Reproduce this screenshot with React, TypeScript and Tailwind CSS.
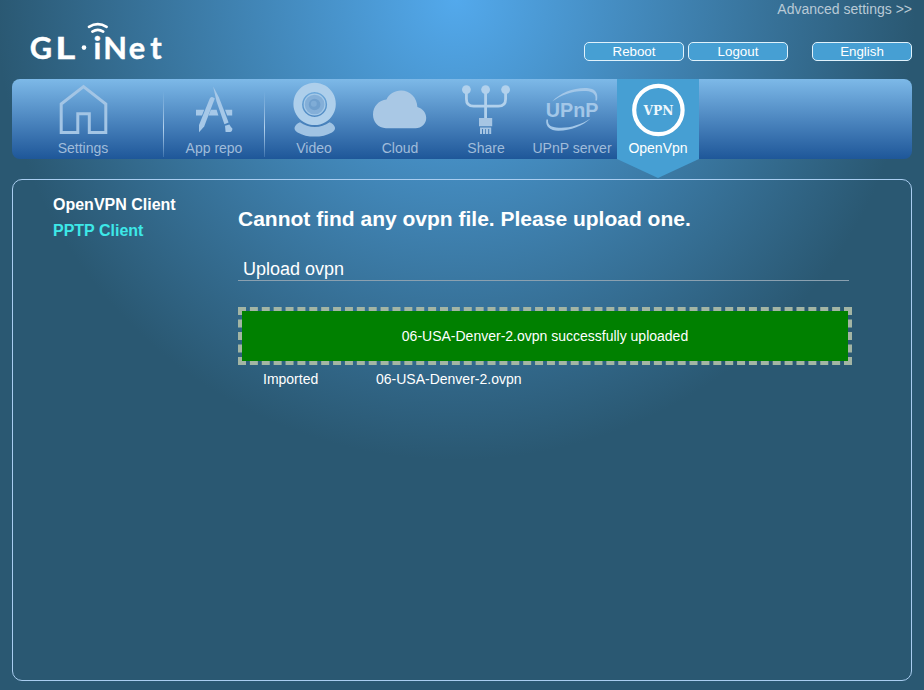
import React from "react";

const label = "mt-px h-[18px] text-center text-sm leading-[18px] whitespace-nowrap";

function Logo() {
  return (
    <svg width="200" height="79" viewBox="0 0 200 79" className="block" fill="#fff">
      <g fontFamily="Lato, 'Open Sans', sans-serif" fontWeight="700" fontSize="30.8" stroke="#fff" strokeWidth="0.4">
        <text x="29.8" y="58.8">G</text>
        <text x="55.2" y="58.8" textLength="20" lengthAdjust="spacingAndGlyphs">L</text>
        <text y="58.8" x="93.4 103.2 128.8 150.2">iNet</text>
      </g>
      <circle cx="84" cy="47.6" r="2.3" />
      <path d="M89 26.8Q97.8 21.6 106.6 26.8M92.4 31.6Q97.8 28 103.2 31.6" fill="none" stroke="#fff" strokeWidth="2.7" strokeLinecap="round" />
    </svg>
  );
}

function HomeIcon() {
  return (
    <svg width="142" height="59" viewBox="12 79 142 59" className="block">
      <path d="M61.2 104L83.5 86.6L105.8 104V132.4H89.3V113.8H77.8V132.4H61.2Z" fill="none" stroke="#a3c5e5" strokeWidth="3" />
    </svg>
  );
}

function AppIcon() {
  return (
    <svg width="100" height="59" viewBox="164 79 100 59" className="block" fill="#a6c8e8">
      <path d="M196 109.8H204.2L202 115.4H196ZM210.8 109.8H216.6L218.4 115.4H208.6ZM225 109.8H232.2V115.4H227.2Z" />
      <path d="M209.8 98.4Q212 95.6 214.8 98.6L204.2 126.6L199 132.2V125Z" />
      <path d="M213.2 86.5L219 97.6L228.6 122.4L224.4 124.2L216.4 101Z" />
      <path d="M225 125.8L229.4 124.4Q230.4 126.4 232.4 128.4Q232.4 131.6 230 132H225.6Z" />
    </svg>
  );
}

function VideoIcon() {
  return (
    <svg width="86" height="59" viewBox="271 79 86 59" className="block">
      <path d="M300 122.2C294 124.8 292.6 129.6 297.6 132.4C307 138 322 138 332 132.4C337 129.6 335.6 124.8 329.6 122.2C321 128.6 308.6 128.6 300 122.2Z" fill="#a0c3e3" />
      <path fillRule="evenodd" d="M314.6 82.7a21.2 21.2 0 1 0 .01 0ZM314.6 92a12.5 12.5 0 1 1-.01 0Z" fill="#aecfeb" />
      <circle cx="314.6" cy="104.5" r="10.4" fill="#84afd8" stroke="#a5c9e8" strokeWidth="1.2" />
      <circle cx="314.6" cy="104.5" r="5.8" fill="#6f9fcd" />
      <circle cx="313.8" cy="103.8" r="3" fill="#7facd6" />
    </svg>
  );
}

function CloudIcon() {
  return (
    <svg width="86" height="59" viewBox="357 79 86 59" className="block">
      <path d="M386 128.2C378 128 373 122 373 114.5C373 106.5 379 100 386.5 99.5C389 94 394.5 90.5 401 90.5C410 90.5 417 97.5 417.4 107C422.5 108.5 426.2 112.7 426.2 118C426.2 124 421.5 128.2 415.5 128.2Z" fill="#a9c8e5" />
    </svg>
  );
}

function ShareIcon() {
  return (
    <svg width="86" height="59" viewBox="443 79 86 59" className="block" fill="#b2d1ec">
      <circle cx="466.4" cy="89.6" r="4.4" />
      <circle cx="485.6" cy="89.6" r="4.4" />
      <circle cx="505.6" cy="89.6" r="4.4" />
      <path d="M466.4 90V99Q466.4 106.2 473.6 106.2H498.4Q505.6 106.2 505.6 99V90M485.6 90V119" fill="none" stroke="#b2d1ec" strokeWidth="2.8" />
      <path d="M479 118H492.2V126.2H479ZM480 127.4H491.2V134H489.2V129H488.2V134H486V129H485.2V134H483V129H482V134H480Z" fill="#a6c5e3" />
    </svg>
  );
}

function UpnpIcon() {
  return (
    <svg width="86" height="59" viewBox="529 79 86 59" className="block" fill="#a3c7e8">
      <path d="M552.2 101.6C560 92.5 575 87.3 587 88C595 88.6 598.5 92.5 597 100.6L595.4 100.6C596.4 95 594 91.6 586 91C574 90.2 561 94.6 552.2 101.6Z" />
      <path d="M546.4 119.6C545 127 550.5 130.6 558 130.8C570 131 583 126 590.6 118.6C581 125 569 128.4 559 127.8C551 127.4 547.4 125.5 548 119.6Z" />
      <text x="545.8" y="116.8" textLength="52.6" lengthAdjust="spacingAndGlyphs" fontFamily="'Liberation Sans', Arial, sans-serif" fontSize="19.5" fontWeight="700">
        UPnP
      </text>
    </svg>
  );
}

function VpnIcon() {
  return (
    <svg width="82" height="59" viewBox="617 79 82 59" className="block" fill="#fff">
      <circle cx="658.4" cy="110" r="24.2" fill="none" stroke="#fff" strokeWidth="4.2" />
      <text x="643.6" y="114.6" textLength="30" fontFamily="'DejaVu Serif', serif" fontSize="12.5" fontWeight="700" lengthAdjust="spacingAndGlyphs" fill="#eef7fc">
        VPN
      </text>
    </svg>
  );
}

function NavItem({ icon, text, className }: { icon: React.ReactNode; text: string; className: string }) {
  return (
    <a className={className}>
      {icon}
      <div className={label}>{text}</div>
    </a>
  );
}

function Divider() {
  return <div className="mt-3 h-[66px] w-px bg-linear-to-b from-[#a9cdec]/0 via-[#b4d2ee] via-55% to-[#a9cdec]/20" />;
}

function TopButton({ text }: { text: string }) {
  return (
    <button className="h-[19px] w-[100px] rounded-[5px] border border-[#e0f2fc] bg-[#469fd3] text-[13.33px] leading-[17px] text-white">
      {text}
    </button>
  );
}

export default function App() {
  return (
    <div className="h-[690px] w-[924px] overflow-hidden bg-[#2a5872] bg-[radial-gradient(circle_460px_at_456px_0px,#53a9ec,#2a5872)] px-3 font-['Liberation_Sans',Arial,sans-serif]">
      <header className="-ml-3 flex h-[79px] justify-between">
        <Logo />
        <div className="flex flex-col items-end">
          <a className="h-[42px] text-sm leading-[18px] text-[#b9cad6]">Advanced settings &gt;&gt;</a>
          <div className="flex gap-1">
            <TopButton text="Reboot" />
            <TopButton text="Logout" />
            <div className="ml-5 flex">
              <TopButton text="English" />
            </div>
          </div>
        </div>
      </header>

      <nav className="flex h-20 rounded-lg bg-linear-to-b from-[#7db9e8] to-[#1e5799] text-[#a0bcda]">
        <NavItem className="mr-[9px] w-[142px]" icon={<HomeIcon />} text="Settings" />
        <Divider />
        <NavItem className="w-[100px]" icon={<AppIcon />} text="App repo" />
        <Divider />
        <NavItem className="ml-1.5 w-[86px]" icon={<VideoIcon />} text="Video" />
        <NavItem className="w-[86px]" icon={<CloudIcon />} text="Cloud" />
        <NavItem className="w-[86px]" icon={<ShareIcon />} text="Share" />
        <NavItem className="w-[86px]" icon={<UpnpIcon />} text="UPnP server" />
        <NavItem
          className="ml-0.5 h-[99px] w-[82px] bg-[#469fd3] text-white [clip-path:polygon(0_0,100%_0,100%_80px,50%_100%,0_80px)]"
          icon={<VpnIcon />}
          text="OpenVpn"
        />
      </nav>

      <main className="mt-5 flex h-[502px] rounded-[10px] border border-[#a9cdf0] text-white">
        <aside className="w-[225px] pt-3 pl-10 text-base leading-[26px] font-bold">
          <div>OpenVPN Client</div>
          <div className="text-[#3de8e8]">PPTP Client</div>
        </aside>
        <section className="w-[614px] pt-[26px]">
          <h1 className="text-[21px] leading-[26px] font-bold">Cannot find any ovpn file. Please upload one.</h1>
          <h2 className="mt-[26px] h-[23px] w-[611px] border-b border-[#8aa0b0] pl-[5px] text-lg leading-[22px]">Upload ovpn</h2>
          <div className="mt-[26px] flex h-[58px] items-center justify-center border-4 border-dashed border-[#a3b5a4] bg-[green] bg-clip-padding text-sm">
            06-USA-Denver-2.ovpn successfully uploaded
          </div>
          <div className="flex pt-[5px] pl-[25px] text-sm leading-[18px]">
            <div className="w-[113px]">Imported</div>
            <div>06-USA-Denver-2.ovpn</div>
          </div>
        </section>
      </main>
    </div>
  );
}
